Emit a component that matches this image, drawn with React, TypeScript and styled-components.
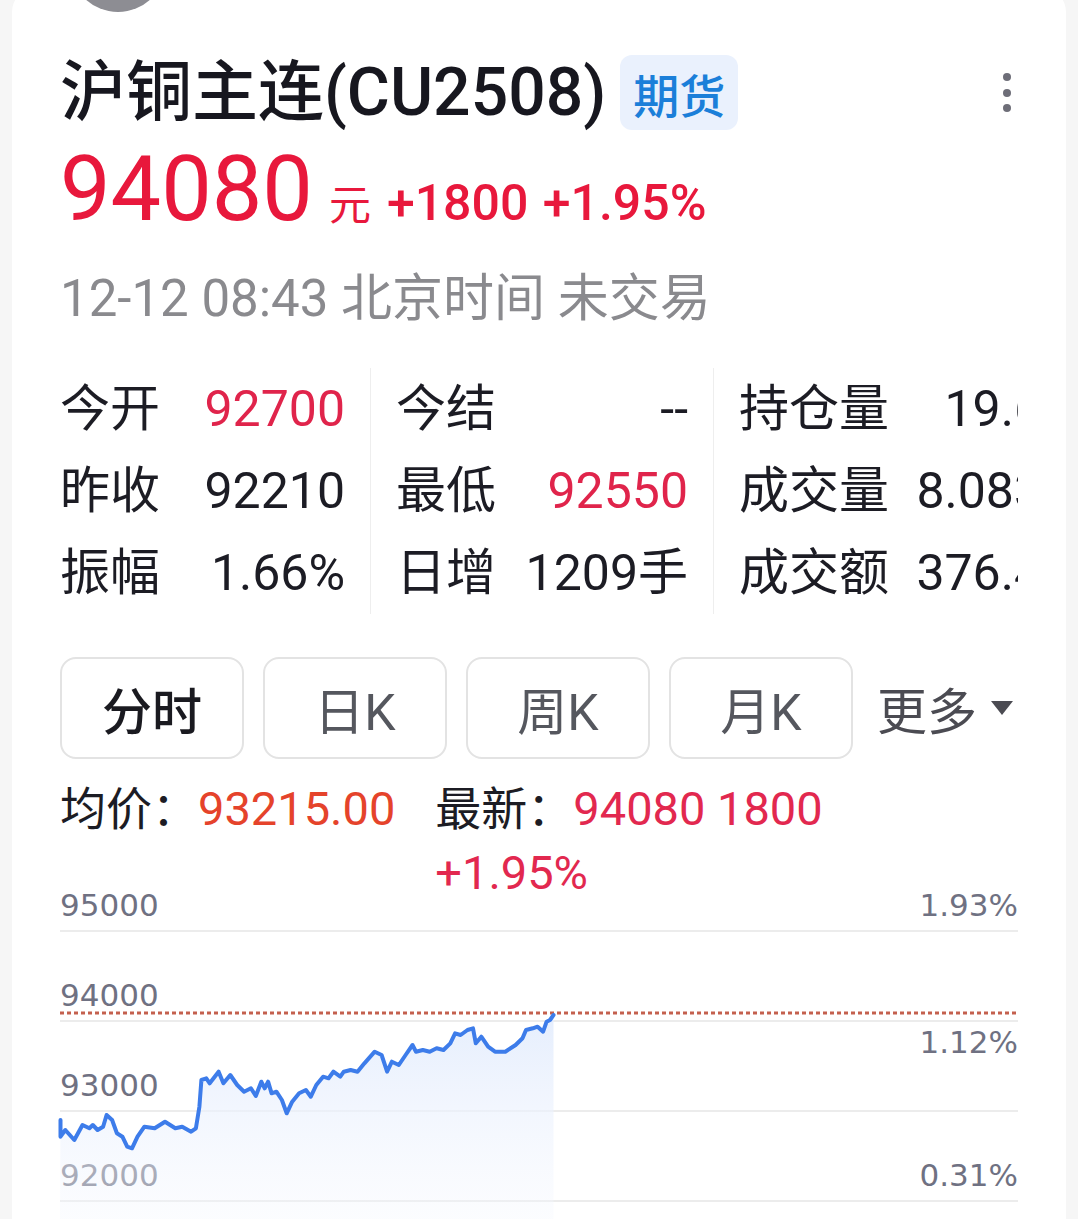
import React from 'react';
import styled, { createGlobalStyle } from 'styled-components';

const GlobalStyle = createGlobalStyle`
  html, body {
    margin: 0;
    padding: 0;
    background: #f6f6f6;
  }
  body {
    font-family: Roboto, "Noto Sans CJK SC", sans-serif;
    overflow: hidden;
  }
`;

const Page = styled.div`
  padding: 0 12px;
`;

const Card = styled.div`
  position: relative;
  margin-top: -12px;
  background: #ffffff;
  border-radius: 24px 24px 0 0;
  padding: 67px 48px 40px;
`;

const Avatar = styled.div`
  position: absolute;
  left: 58px;
  top: -72px;
  width: 96px;
  height: 96px;
  border-radius: 50%;
  background: #8d8d93;
`;

const TitleRow = styled.div`
  display: flex;
  align-items: center;
  height: 75px;
`;

const Title = styled.h1`
  margin: 0;
  font-size: 66px;
  font-weight: 500;
  line-height: 1;
  color: #17171f;
  white-space: nowrap;
`;

const Badge = styled.span`
  display: flex;
  align-items: center;
  height: 75px;
  margin-left: 14px;
  padding: 0 13px;
  border-radius: 12px;
  background: #eaf1fd;
  color: #1b7fd9;
  font-size: 46px;
  font-weight: 500;
`;

const MoreButton = styled.div`
  margin-left: auto;
  width: 22px;
  display: flex;
  flex-direction: column;
  align-items: center;
  gap: 7.5px;
`;

const Dot = styled.span`
  width: 8px;
  height: 8px;
  border-radius: 50%;
  background: #6e6e78;
`;

const PriceRow = styled.div`
  display: flex;
  align-items: baseline;
  margin-top: 15px;
  color: #e8183c;
`;

const BigPrice = styled.span`
  font-size: 90px;
  line-height: 1;
`;

const Unit = styled.span`
  margin-left: 16px;
  font-size: 42px;
`;

const Change = styled.span`
  margin-left: 16px;
  font-size: 50px;
  font-weight: 500;
  word-spacing: 2px;
`;

const TimeLine = styled.div`
  margin-top: 34px;
  font-size: 51px;
  line-height: 60px;
  color: #8a8a8e;
`;

const StatsGrid = styled.div`
  display: grid;
  grid-template-columns: 310px 343px 1fr;
  margin-top: 39px;
`;

const StatColumn = styled.div<{ $first?: boolean; $clip?: boolean }>`
  padding: 0 ${(p) => (p.$clip ? '0' : '25px')} 0 ${(p) => (p.$first ? '0' : '25px')};
  border-left: ${(p) => (p.$first ? 'none' : '1px solid #eeeeee')};
  overflow: hidden;
`;

const StatRow = styled.div<{ $extend?: boolean }>`
  display: flex;
  justify-content: space-between;
  width: ${(p) => (p.$extend ? 'calc(100% + 74px)' : '100%')};
  height: 82px;
  line-height: 82px;
  font-size: 50px;
  color: #1c1c24;
  white-space: nowrap;
`;

const StatValue = styled.span<{ $red?: boolean }>`
  color: ${(p) => (p.$red ? '#e0244b' : '#1c1c24')};
`;

const Tabs = styled.div`
  display: flex;
  align-items: center;
  gap: 19px;
  margin-top: 43px;
`;

const Tab = styled.div<{ $active?: boolean }>`
  width: 184px;
  height: 102px;
  box-sizing: border-box;
  display: flex;
  align-items: center;
  justify-content: center;
  border: 2px solid #e3e3e3;
  border-radius: 16px;
  font-size: 50px;
  font-weight: ${(p) => (p.$active ? 500 : 400)};
  color: ${(p) => (p.$active ? '#1a1a20' : '#55575e')};
`;

const MoreTab = styled.div`
  flex: 1;
  display: flex;
  align-items: center;
  justify-content: flex-end;
  font-size: 50px;
  color: #4b4b52;
`;

const Caret = styled.span`
  margin-left: 14px;
  margin-right: 5px;
  width: 0;
  height: 0;
  border-left: 11px solid transparent;
  border-right: 11px solid transparent;
  border-top: 14px solid #4b4b52;
`;

const AvgLine = styled.div`
  display: flex;
  align-items: flex-start;
  gap: 40px;
  margin-top: 18px;
  font-size: 46px;
  line-height: 64px;
  color: #1c1c24;
`;

const AvgItem = styled.div<{ $narrow?: boolean }>`
  max-width: ${(p) => (p.$narrow ? '420px' : 'none')};
`;

const AvgValue = styled.span<{ $tone: 'orange' | 'red' }>`
  font-size: 47px;
  color: ${(p) => (p.$tone === 'orange' ? '#e5432b' : '#e2284f')};
`;

const Chart = styled.div`
  position: relative;
  margin-top: -25px;
`;

const GridRow = styled.div<{ $first?: boolean }>`
  display: flex;
  justify-content: space-between;
  height: ${(p) => (p.$first ? '50px' : '88px')};
  border-bottom: 2px solid #ececec;
  font-family: "DejaVu Sans", sans-serif;
  font-size: 31px;
  line-height: 40px;
  color: #6f7182;
`;

const AxisLabel = styled.span<{ $top?: boolean }>`
  align-self: ${(p) => (p.$top ? 'flex-start' : 'flex-end')};
  padding-bottom: ${(p) => (p.$top ? '0' : '5px')};
`;

const ChartSvg = styled.svg`
  position: absolute;
  left: 0;
  top: 0;
  overflow: visible;
  pointer-events: none;
`;

// traced from the reference (x scaled, y in px from chart top)
const raw: [number, number][] = [
  [88, 720], [88, 770], [95, 750], [108, 780], [120, 735], [130, 745], [135, 735], [142, 750],
  [150, 740], [155, 705], [163, 720], [170, 760], [178, 770], [185, 800], [192, 805], [200, 770],
  [210, 740], [225, 745], [240, 725], [255, 745], [265, 740], [278, 755], [285, 745], [290, 680],
  [293, 600], [300, 595], [305, 610], [318, 575], [325, 610], [335, 585], [345, 615], [355, 635],
  [365, 625], [372, 648], [380, 605], [385, 625], [390, 605], [395, 640], [402, 635], [410, 660],
  [417, 700], [425, 665], [435, 640], [445, 630], [452, 650], [460, 615], [470, 590], [478, 595],
  [485, 575], [495, 590], [500, 575], [510, 570], [520, 575], [530, 550], [545, 515], [555, 525],
  [563, 575], [570, 545], [580, 555], [590, 525], [600, 495], [605, 515], [615, 510], [625, 515],
  [635, 505], [645, 510], [655, 490], [662, 460], [670, 465], [680, 450], [688, 445], [692, 490],
  [700, 470], [710, 500], [720, 515], [735, 515], [750, 495], [760, 475], [765, 450], [775, 445],
  [782, 440], [790, 455], [795, 425], [800, 420], [805, 405],
];

const points = raw.map(([x, y]) => [x / 1.4545 - 60, y / 3] as [number, number]);
const linePath = points.map(([x, y], i) => `${i ? 'L' : 'M'}${x.toFixed(1)} ${y.toFixed(1)}`).join(' ');
const lastX = points[points.length - 1][0];
const areaPath = `${linePath} L${lastX.toFixed(1)} 340 L0 340 Z`;

const stats = [
  [
    { label: '今开', value: '92700', red: true },
    { label: '昨收', value: '92210' },
    { label: '振幅', value: '1.66%' },
  ],
  [
    { label: '今结', value: '--' },
    { label: '最低', value: '92550', red: true },
    { label: '日增', value: '1209手' },
  ],
  [
    { label: '持仓量', value: '19.6万' },
    { label: '成交量', value: '8.083万' },
    { label: '成交额', value: '376.4亿' },
  ],
];

const App: React.FC = () => {
  return (
    <Page>
      <GlobalStyle />
      <Card>
        <Avatar />
        <TitleRow>
          <Title>沪铜主连(CU2508)</Title>
          <Badge>期货</Badge>
          <MoreButton>
            <Dot />
            <Dot />
            <Dot />
          </MoreButton>
        </TitleRow>

        <PriceRow>
          <BigPrice>94080</BigPrice>
          <Unit>元</Unit>
          <Change>+1800 +1.95%</Change>
        </PriceRow>

        <TimeLine>12-12 08:43 北京时间 未交易</TimeLine>

        <StatsGrid>
          {stats.map((col, ci) => (
            <StatColumn key={ci} $first={ci === 0} $clip={ci === 2}>
              {col.map((s) => (
                <StatRow key={s.label} $extend={ci === 2}>
                  <span>{s.label}</span>
                  <StatValue $red={s.red}>{s.value}</StatValue>
                </StatRow>
              ))}
            </StatColumn>
          ))}
        </StatsGrid>

        <Tabs>
          <Tab $active>分时</Tab>
          <Tab>日K</Tab>
          <Tab>周K</Tab>
          <Tab>月K</Tab>
          <MoreTab>
            更多
            <Caret />
          </MoreTab>
        </Tabs>

        <AvgLine>
          <AvgItem>
            均价：<AvgValue $tone="orange">93215.00</AvgValue>
          </AvgItem>
          <AvgItem $narrow>
            最新：<AvgValue $tone="red">94080 1800 +1.95%</AvgValue>
          </AvgItem>
        </AvgLine>

        <Chart>
          <GridRow $first>
            <AxisLabel>95000</AxisLabel>
            <AxisLabel>1.93%</AxisLabel>
          </GridRow>
          <GridRow>
            <AxisLabel>94000</AxisLabel>
          </GridRow>
          <GridRow>
            <AxisLabel>93000</AxisLabel>
            <AxisLabel $top>1.12%</AxisLabel>
          </GridRow>
          <GridRow>
            <AxisLabel>92000</AxisLabel>
            <AxisLabel>0.31%</AxisLabel>
          </GridRow>
          <ChartSvg width="958" height="322" viewBox="0 0 958 322">
            <defs>
              <linearGradient id="areaFill" x1="0" y1="0" x2="0" y2="1">
                <stop offset="0%" stopColor="#e4edfd" stopOpacity="0.95" />
                <stop offset="100%" stopColor="#f4f7fe" stopOpacity="0.3" />
              </linearGradient>
            </defs>
            <path d={areaPath} fill="url(#areaFill)" />
            <line x1="0" y1="133" x2="958" y2="133" stroke="#c4604e" strokeWidth="3" strokeDasharray="4 3" />
            <path d={linePath} fill="none" stroke="#3d7cea" strokeWidth="4" strokeLinejoin="round" strokeLinecap="round" />
          </ChartSvg>
        </Chart>
      </Card>
    </Page>
  );
};

export default App;
